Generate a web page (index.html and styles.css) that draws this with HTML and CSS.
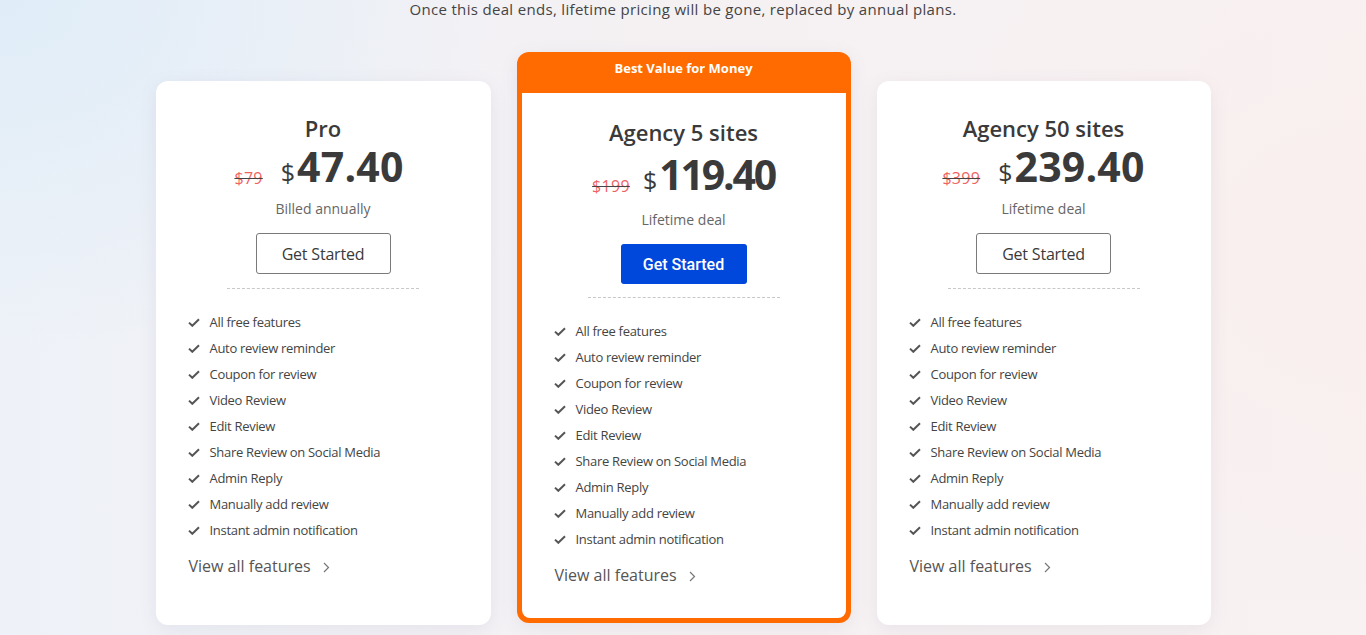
FILE: index.html
```html
<!DOCTYPE html>
<html lang="en">
<head>
<meta charset="utf-8">
<title>Pricing</title>
<link rel="stylesheet" href="styles.css">
</head>
<body>
<main class="page">
  <p class="intro">Once this deal ends, lifetime pricing will be gone, replaced by annual plans.</p>
  <section class="plans">
    <article class="card side">
      <h2 class="title">Pro</h2>
      <div class="price"><span class="old">$79</span><span class="cur">$</span><span class="amount">47.40</span></div>
      <p class="note">Billed annually</p>
      <a class="btn outline" href="#">Get Started</a>
      <hr class="sep">
      <ul class="features">
        <li><svg class="chk" viewBox="0 0 12 9"><path d="M1 4.6 L4.3 7.8 L11 1.2"/></svg>All free features</li>
        <li><svg class="chk" viewBox="0 0 12 9"><path d="M1 4.6 L4.3 7.8 L11 1.2"/></svg>Auto review reminder</li>
        <li><svg class="chk" viewBox="0 0 12 9"><path d="M1 4.6 L4.3 7.8 L11 1.2"/></svg>Coupon for review</li>
        <li><svg class="chk" viewBox="0 0 12 9"><path d="M1 4.6 L4.3 7.8 L11 1.2"/></svg>Video Review</li>
        <li><svg class="chk" viewBox="0 0 12 9"><path d="M1 4.6 L4.3 7.8 L11 1.2"/></svg>Edit Review</li>
        <li><svg class="chk" viewBox="0 0 12 9"><path d="M1 4.6 L4.3 7.8 L11 1.2"/></svg>Share Review on Social Media</li>
        <li><svg class="chk" viewBox="0 0 12 9"><path d="M1 4.6 L4.3 7.8 L11 1.2"/></svg>Admin Reply</li>
        <li><svg class="chk" viewBox="0 0 12 9"><path d="M1 4.6 L4.3 7.8 L11 1.2"/></svg>Manually add review</li>
        <li><svg class="chk" viewBox="0 0 12 9"><path d="M1 4.6 L4.3 7.8 L11 1.2"/></svg>Instant admin notification</li>
      </ul>
      <a class="more" href="#">View all features<svg class="chev" viewBox="0 0 7 11"><path d="M1 1 L5.5 5.5 L1 10"/></svg></a>
    </article>

    <article class="card featured">
      <div class="badge">Best Value for Money</div>
      <div class="inner">
        <h2 class="title">Agency 5 sites</h2>
        <div class="price"><span class="old">$199</span><span class="cur">$</span><span class="amount">119.40</span></div>
        <p class="note">Lifetime deal</p>
        <a class="btn solid" href="#">Get Started</a>
        <hr class="sep">
        <ul class="features">
          <li><svg class="chk" viewBox="0 0 12 9"><path d="M1 4.6 L4.3 7.8 L11 1.2"/></svg>All free features</li>
          <li><svg class="chk" viewBox="0 0 12 9"><path d="M1 4.6 L4.3 7.8 L11 1.2"/></svg>Auto review reminder</li>
          <li><svg class="chk" viewBox="0 0 12 9"><path d="M1 4.6 L4.3 7.8 L11 1.2"/></svg>Coupon for review</li>
          <li><svg class="chk" viewBox="0 0 12 9"><path d="M1 4.6 L4.3 7.8 L11 1.2"/></svg>Video Review</li>
          <li><svg class="chk" viewBox="0 0 12 9"><path d="M1 4.6 L4.3 7.8 L11 1.2"/></svg>Edit Review</li>
          <li><svg class="chk" viewBox="0 0 12 9"><path d="M1 4.6 L4.3 7.8 L11 1.2"/></svg>Share Review on Social Media</li>
          <li><svg class="chk" viewBox="0 0 12 9"><path d="M1 4.6 L4.3 7.8 L11 1.2"/></svg>Admin Reply</li>
          <li><svg class="chk" viewBox="0 0 12 9"><path d="M1 4.6 L4.3 7.8 L11 1.2"/></svg>Manually add review</li>
          <li><svg class="chk" viewBox="0 0 12 9"><path d="M1 4.6 L4.3 7.8 L11 1.2"/></svg>Instant admin notification</li>
        </ul>
        <a class="more" href="#">View all features<svg class="chev" viewBox="0 0 7 11"><path d="M1 1 L5.5 5.5 L1 10"/></svg></a>
      </div>
    </article>

    <article class="card side">
      <h2 class="title">Agency 50 sites</h2>
      <div class="price"><span class="old">$399</span><span class="cur">$</span><span class="amount">239.40</span></div>
      <p class="note">Lifetime deal</p>
      <a class="btn outline" href="#">Get Started</a>
      <hr class="sep">
      <ul class="features">
        <li><svg class="chk" viewBox="0 0 12 9"><path d="M1 4.6 L4.3 7.8 L11 1.2"/></svg>All free features</li>
        <li><svg class="chk" viewBox="0 0 12 9"><path d="M1 4.6 L4.3 7.8 L11 1.2"/></svg>Auto review reminder</li>
        <li><svg class="chk" viewBox="0 0 12 9"><path d="M1 4.6 L4.3 7.8 L11 1.2"/></svg>Coupon for review</li>
        <li><svg class="chk" viewBox="0 0 12 9"><path d="M1 4.6 L4.3 7.8 L11 1.2"/></svg>Video Review</li>
        <li><svg class="chk" viewBox="0 0 12 9"><path d="M1 4.6 L4.3 7.8 L11 1.2"/></svg>Edit Review</li>
        <li><svg class="chk" viewBox="0 0 12 9"><path d="M1 4.6 L4.3 7.8 L11 1.2"/></svg>Share Review on Social Media</li>
        <li><svg class="chk" viewBox="0 0 12 9"><path d="M1 4.6 L4.3 7.8 L11 1.2"/></svg>Admin Reply</li>
        <li><svg class="chk" viewBox="0 0 12 9"><path d="M1 4.6 L4.3 7.8 L11 1.2"/></svg>Manually add review</li>
        <li><svg class="chk" viewBox="0 0 12 9"><path d="M1 4.6 L4.3 7.8 L11 1.2"/></svg>Instant admin notification</li>
      </ul>
      <a class="more" href="#">View all features<svg class="chev" viewBox="0 0 7 11"><path d="M1 1 L5.5 5.5 L1 10"/></svg></a>
    </article>
  </section>
</main>
</body>
</html>
```
FILE: styles.css
```css
* { box-sizing: border-box; }
html, body { margin: 0; padding: 0; }
body {
  height: 635px;
  overflow: hidden;
  font-family: "Open Sans", "Noto Sans", sans-serif;
  color: #3a3a3a;
  background:
    radial-gradient(ellipse 700px 500px at 0% 0%, rgba(222, 236, 248, 0.9), rgba(222, 236, 248, 0) 70%),
    radial-gradient(ellipse 700px 600px at 100% 40%, rgba(250, 238, 238, 0.9), rgba(250, 238, 238, 0) 70%),
    linear-gradient(90deg, #eef2f8 0%, #f5f1f3 50%, #f8f2f2 100%);
}
.page {
  display: flex;
  flex-direction: column;
  align-items: center;
}
.intro {
  margin: 0;
  font-size: 15px;
  line-height: 18px;
  color: #444;
  letter-spacing: 0.32px;
}
.plans {
  display: flex;
  align-items: flex-start;
  gap: 26px;
  margin-top: 34px;
}
.card {
  width: 334px;
  background: #fff;
  border-radius: 12px;
  text-align: center;
  box-shadow: 0 4px 18px rgba(120, 110, 150, 0.10);
}
.card.side {
  margin-top: 29px;
  height: 544px;
  padding: 33px 0 0;
}
.card.side:first-child { width: 335px; }
.card.featured {
  background: #ff6b00;
  height: 571px;
  padding: 0 5px 5px;
  display: flex;
  flex-direction: column;
}
.badge {
  color: #fff;
  font-weight: 700;
  font-size: 13px;
  line-height: 20px;
  padding: 6px 0 15px;
}
.inner {
  flex: 1;
  background: #fff;
  border-radius: 0 0 8px 8px;
  padding-top: 25px;
}
.title {
  margin: 0;
  font-size: 22px;
  font-weight: 600;
  line-height: 28px;
  color: #3a3a3a;
}
.price {
  display: flex;
  justify-content: center;
  align-items: baseline;
  line-height: 42px;
  height: 42px;
  margin-top: 3px;
}
.side:first-child .price { padding-right: 8px; }
.old {
  font-size: 16px;
  color: #f06262;
  text-decoration: line-through;
  text-decoration-color: #444;
  margin-right: 18px;
  position: relative;
  top: 2px;
  letter-spacing: 0.3px;
}
.featured .old { margin-right: 13px; }
.cur {
  font-size: 25px;
  font-weight: 500;
  margin-right: 2px;
  color: #3a3a3a;
}
.amount {
  font-size: 41px;
  font-weight: 700;
  letter-spacing: 0.2px;
  color: #3a3a3a;
}
.featured .amount { letter-spacing: -2.2px; }
.featured .price { margin-top: 7px; }
.note {
  margin: 12px 0 0;
  font-size: 14px;
  line-height: 20px;
  color: #666;
}
.featured .note { margin-top: 15px; }
.btn {
  display: flex;
  align-items: center;
  justify-content: center;
  margin: 14px auto 0;
  text-decoration: none;
  border-radius: 3px;
}
.btn.outline {
  width: 135px;
  height: 41px;
  border: 1px solid #7a7a7a;
  color: #3a3a3a;
  font-size: 16px;
  letter-spacing: -0.2px;
}
.btn.solid {
  width: 126px;
  height: 40px;
  background: #0047dc;
  color: #fff;
  font-family: Roboto, sans-serif;
  font-weight: 500;
  font-size: 16px;
}
.sep {
  width: 192px;
  margin: 14px auto 0;
  border: 0;
  border-top: 1px dashed #c8c8c8;
  height: 0;
}
.featured .sep { margin-top: 13px; }
.features {
  list-style: none;
  margin: 20px 0 0;
  padding: 0 0 0 32px;
  text-align: left;
}
.features li {
  display: flex;
  align-items: center;
  font-size: 13px;
  line-height: 26px;
  height: 26px;
  color: #444;
  letter-spacing: -0.3px;
}
.chk {
  width: 12px;
  height: 9px;
  margin-right: 10px;
  fill: none;
  stroke: #555;
  stroke-width: 2;
  flex: none;
}
.more {
  display: flex;
  align-items: center;
  margin: 11px 0 0 33px;
  font-size: 16px;
  line-height: 24px;
  color: #555;
  text-decoration: none;
}
.chev {
  width: 7px;
  height: 11px;
  margin-left: 12px;
  margin-top: 2px;
  fill: none;
  stroke: #777;
  stroke-width: 1.2;
}
```
